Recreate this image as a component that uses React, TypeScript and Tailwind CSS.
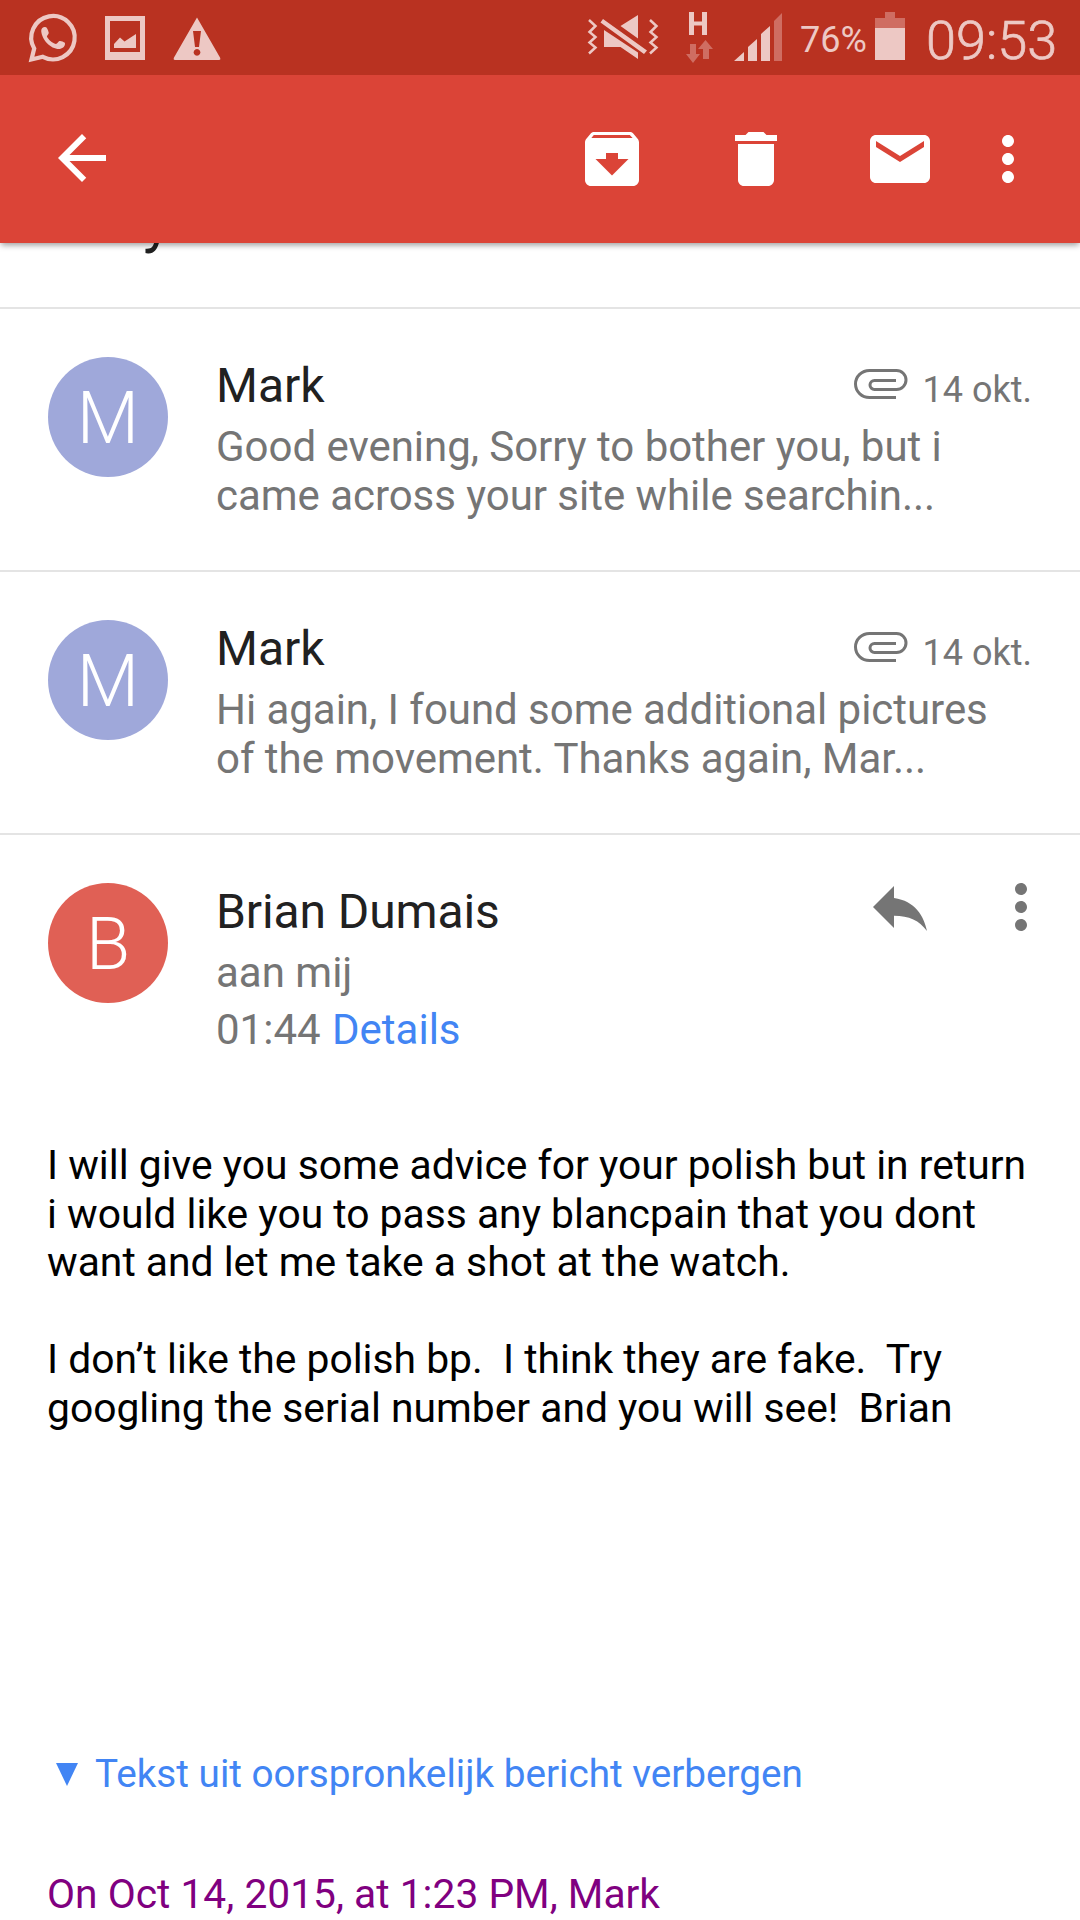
import { ReactNode } from "react"

function Icon({ d, className }: { d: string; className?: string }) {
  return (
    <svg viewBox="0 0 24 24" fill="currentColor" className={`size-[72px] shrink-0 ${className ?? ""}`}>
      <path d={d} />
    </svg>
  )
}

const icons = {
  back: "M20 11H7.83l5.59-5.59L12 4l-8 8 8 8 1.41-1.41L7.83 13H20v-2z",
  archive:
    "M20.54 5.23l-1.39-1.68C18.88 3.21 18.47 3 18 3H6c-.47 0-.88.21-1.16.55L3.46 5.23C3.17 5.57 3 6.02 3 6.5V19c0 1.1.9 2 2 2h14c1.1 0 2-.9 2-2V6.5c0-.48-.17-.93-.46-1.27zM12 17.5L6.5 12H10v-2h4v2h3.5L12 17.5zM5.12 5l.81-1h12l.94 1H5.12z",
  trash: "M6 19c0 1.1.9 2 2 2h8c1.1 0 2-.9 2-2V7H6v12zM19 4h-3.5l-1-1h-5l-1 1H5v2h14V4z",
  mail: "M20 4H4c-1.1 0-2 .9-2 2v12c0 1.1.9 2 2 2h16c1.1 0 2-.9 2-2V6c0-1.1-.9-2-2-2zm0 4l-8 5-8-5V6l8 5 8-5v2z",
  more: "M12 8c1.1 0 2-.9 2-2s-.9-2-2-2-2 .9-2 2 .9 2 2 2zm0 2c-1.1 0-2 .9-2 2s.9 2 2 2 2-.9 2-2-.9-2-2-2zm0 6c-1.1 0-2 .9-2 2s.9 2 2 2 2-.9 2-2-.9-2-2-2z",
  reply: "M10 9V5l-7 7 7 7v-4.1c5 0 8.5 1.6 11 5.1-1-5-4-10-11-11z",
}

function StatusBar() {
  return (
    <div className="flex h-[75px] items-start bg-[#b93221] text-[#edc8c4]">
      {/* Notifications */}
      <svg width="230" height="75" viewBox="0 0 230 75" fill="currentColor" className="shrink-0">
        <path
          d="M34.2 48.500A21.700 21.700 0 1 1 42.800 56.800L31.500 59.500Z"
          fill="none"
          stroke="currentColor"
          strokeWidth="4.200"
        />
        <path d="M41.2 31c0-3 2-4.200 4-4 2 .2 2.800 3 3.500 5.500.4 1.500-1.500 2.500-1.800 4 1.500 3 5 6.500 9 7.500 1.500-.3 2-2 3.500-3 1.500-.4 4 .8 5.500 1.800.6 3-1.500 5.500-5 6.200-9 .6-18-9.200-18.700-18z" />
        <path fillRule="evenodd" d="M105 16h40v44h-40zM110 21v31h30V21z" />
        <path d="M114 44l6-6.500 4.500 4 11.500-7.500v14h-22z" />
        <path fillRule="evenodd" d="M197 17.500l23 40q1 2.500-1 2.500h-44q-2 0-1-2.500zM193 31l2 16h4l2-16zM197 49a3.400 3.400 0 1 0 .01 0z" />
      </svg>

      {/* Sound, network and signal */}
      <svg width="216" height="75" viewBox="576 0 216 75" fill="currentColor" className="ml-[346px] shrink-0">
        <g fill="none" stroke="currentColor" strokeWidth="2.500">
          <path d="M589 20l6.500 6-6 6 6 5-6 5.500 6 5-6.500 6" />
          <path d="M650 20l6.500 6-6 6 6 5-6 5.500 6 5-6.500 6" />
        </g>
        <path d="M603 19l44 31.500-3 3.500L600.500 22.500zM638 15v23.500L620.500 26zM604 30l34 22.500v6.500L620.500 47H604z" />
        <path d="M689 12h5v9.500h8V12h5v23h-5v-9.500h-8V35H689z" />
        <g className="text-[#cf6d62]">
          <path d="M690 44h6v10h4l-7 9-7-9h4zM703 59h6V49h4l-7.500-9-7.500 9h5z" />
          <path d="M774 61V21l8-8v48z" />
        </g>
        <path d="M734 61l10-9v9zM748 61V47l9-8v22zM761 61V34l9-8v35z" />
      </svg>

      <span className="ml-[8px] w-[75px] whitespace-nowrap text-[36px] leading-[80px]">76%</span>
      <div className="flex h-[60px] w-[30px] shrink-0 flex-col items-center pt-3">
        <div className="h-[6px] w-[10px] bg-[#cf6d62]" />
        <div className="h-[10px] w-[30px] bg-[#cf6d62]" />
        <div className="h-[32px] w-[30px] bg-[#edc8c4]" />
      </div>
      <span className="ml-[21px] whitespace-nowrap text-[54px] font-light leading-[82px] [-webkit-text-stroke:0.7px_#edc8c4]">
        09:53
      </span>
    </div>
  )
}

function Toolbar() {
  return (
    <div className="flex h-[168px] items-center bg-[#db4437] pl-[46px] pr-9 text-white">
      <Icon d={icons.back} className="mb-0.5" />
      <div className="ml-auto flex">
        <Icon d={icons.archive} />
        <Icon d={icons.trash} className="ml-[72px]" />
        <Icon d={icons.mail} className="ml-[72px]" />
        <Icon d={icons.more} className="ml-9" />
      </div>
    </div>
  )
}

function Avatar({ letter, className }: { letter: string; className: string }) {
  return (
    <div className={`size-[120px] shrink-0 rounded-full text-center text-[72px] font-light leading-[123px] text-white ${className}`}>
      {letter}
    </div>
  )
}

const messages = [
  { sender: "Mark", date: "14 okt.", lines: ["Good evening, Sorry to bother you, but i", "came across your site while searchin..."] },
  { sender: "Mark", date: "14 okt.", lines: ["Hi again, I found some additional pictures", "of the movement. Thanks again, Mar..."] },
]

function CollapsedMessage({ sender, date, lines }: (typeof messages)[number]) {
  return (
    <div className="flex h-[263px] border-b-2 border-[#e4e4e4] px-12 pt-12">
      <Avatar letter={sender[0]} className="bg-[#9fa8da]" />
      <div className="ml-12 flex-1 whitespace-nowrap text-[#757575]">
        <div className="flex items-baseline">
          <span className="text-[48px] leading-[58px] text-[#212121]">{sender}</span>
          <svg width="54" height="31" viewBox="0 0 54 31" fill="none" stroke="currentColor" strokeWidth="3" className="ml-auto mt-3 self-start">
            <path d="M42 28.500H15.500A14 13.500 0 0 1 15.500 1.500H42.500A9.500 9.500 0 0 1 42.500 20.500H20.500A4.500 4.500 0 0 1 20.500 11.500H42" />
          </svg>
          <span className="ml-[15px] text-[36px]">{date}</span>
        </div>
        <p className="mt-[5px] text-[42px] leading-[49px] tracking-[-0.04px]">
          {lines[0]}
          <br />
          {lines[1]}
        </p>
      </div>
    </div>
  )
}

function MessageBody({ children }: { children: ReactNode }) {
  return <div className="whitespace-pre text-[40.8px] leading-[48.5px] text-black">{children}</div>
}

export default function App() {
  return (
    <div className="flex h-[1920px] w-[1080px] flex-col overflow-hidden bg-white font-['Roboto',sans-serif]">
      <header className="z-10 shrink-0 shadow-[0_3px_6px_-1px_rgba(0,0,0,0.4)]">
        <StatusBar />
        <Toolbar />
      </header>

      {/* Subject line, scrolled under the toolbar */}
      <div className="h-[66px] shrink-0 border-b-2 border-[#e4e4e4] pl-12">
        <h1 className="-mt-[57px] ml-[95px] text-[60px] leading-[70px] text-[#212121]">y</h1>
      </div>

      {messages.map((message, index) => (
        <CollapsedMessage key={index} {...message} />
      ))}

      <div className="flex shrink-0 pl-12 pt-12">
        <Avatar letter="B" className="bg-[#e06055]" />
        <div className="ml-12 flex-1 text-[42px] text-[#757575]">
          <div className="text-[48px] leading-[58px] tracking-[-0.1px] text-[#212121]">Brian Dumais</div>
          <div className="mt-[7px] leading-[49px]">aan mij</div>
          <div className="mt-2 leading-[49px]">
            01:44 <span className="ml-px text-[#4285f4]">Details</span>
          </div>
        </div>
        <div className="-mt-3 mr-[23px] flex text-[#757575]">
          <Icon d={icons.reply} />
          <Icon d={icons.more} className="ml-[49px]" />
        </div>
      </div>

      <div className="pl-[47px] pt-[87px]">
        <MessageBody>
          {"I will give you some advice for your polish but in return\ni would like you to pass any blancpain that you dont\nwant and let me take a shot at the watch.\n\nI don’t like the polish bp.  I think they are fake.  Try\ngoogling the serial number and you will see!  Brian"}
        </MessageBody>

        <div className="mt-[318px] flex items-center text-[38.7px] leading-[48px] text-[#4285f4]">
          <svg width="22" height="23" viewBox="0 0 22 23" fill="currentColor" className="ml-[9px]">
            <path d="M0 0h22L11 23z" />
          </svg>
          <span className="ml-[17px]">Tekst uit oorspronkelijk bericht verbergen</span>
        </div>
        <div className="mt-[72px] text-[40.75px] leading-[48px] text-[#800080]">On Oct 14, 2015, at 1:23 PM, Mark</div>
      </div>
    </div>
  )
}
